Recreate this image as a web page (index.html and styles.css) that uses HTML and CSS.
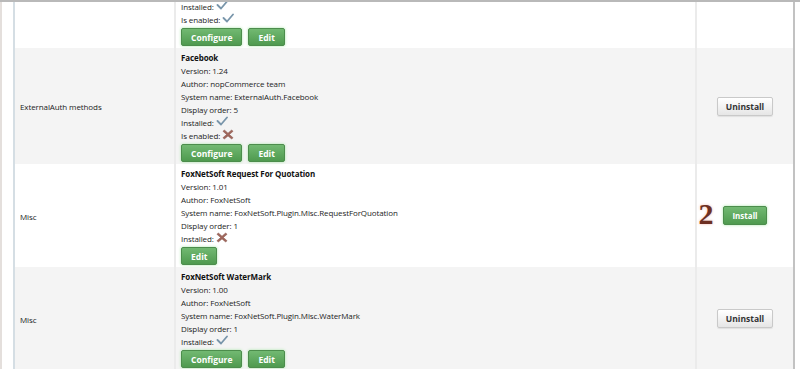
FILE: index.html
```html
<!DOCTYPE html>
<html lang="en">
<head>
    <meta charset="UTF-8">
    <meta name="viewport" content="width=device-width, initial-scale=1.0">
    <title>Plugins</title>
    <link rel="stylesheet" href="styles.css">
</head>
<body>
    <div class="frame">
        <table class="plugins">
            <colgroup>
                <col class="col-group">
                <col class="col-info">
                <col class="col-action">
            </colgroup>
            <tr class="row-white">
                <td class="group"></td>
                <td class="info">
                    <div class="line">Installed: <svg class="ico" viewBox="0 0 12 11"><path class="tick" d="M1.5 5 L5 8.5 L11 1.5"/></svg></div>
                    <div class="line">Is enabled: <svg class="ico" viewBox="0 0 12 11"><path class="tick" d="M1.5 5 L5 8.5 L11 1.5"/></svg></div>
                    <div class="btns">
                        <button class="btn-green">Configure</button>
                        <button class="btn-green">Edit</button>
                    </div>
                </td>
                <td class="action"></td>
            </tr>
            <tr class="row-gray">
                <td class="group">ExternalAuth methods</td>
                <td class="info">
                    <div class="line title">Facebook</div>
                    <div class="line">Version: 1.24</div>
                    <div class="line">Author: nopCommerce team</div>
                    <div class="line">System name: ExternalAuth.Facebook</div>
                    <div class="line">Display order: 5</div>
                    <div class="line">Installed: <svg class="ico" viewBox="0 0 12 11"><path class="tick" d="M1.5 5 L5 8.5 L11 1.5"/></svg></div>
                    <div class="line">Is enabled: <svg class="ico" viewBox="0 0 12 12"><path class="cross" d="M2 1 L6 4.5 L10 1 L11.5 2.5 L7.5 6 L11.5 9.5 L10 11 L6 7.5 L2 11 L0.5 9.5 L4.5 6 L0.5 2.5 Z"/></svg></div>
                    <div class="btns">
                        <button class="btn-green">Configure</button>
                        <button class="btn-green">Edit</button>
                    </div>
                </td>
                <td class="action"><button class="btn-gray">Uninstall</button></td>
            </tr>
            <tr class="row-white">
                <td class="group">Misc</td>
                <td class="info">
                    <div class="line title">FoxNetSoft Request For Quotation</div>
                    <div class="line">Version: 1.01</div>
                    <div class="line">Author: FoxNetSoft</div>
                    <div class="line">System name: FoxNetSoft.Plugin.Misc.RequestForQuotation</div>
                    <div class="line">Display order: 1</div>
                    <div class="line">Installed: <svg class="ico" viewBox="0 0 12 12"><path class="cross" d="M2 1 L6 4.5 L10 1 L11.5 2.5 L7.5 6 L11.5 9.5 L10 11 L6 7.5 L2 11 L0.5 9.5 L4.5 6 L0.5 2.5 Z"/></svg></div>
                    <div class="btns">
                        <button class="btn-green">Edit</button>
                    </div>
                </td>
                <td class="action">
                    <span class="install-wrap">
                        <span class="step">2</span>
                        <button class="btn-green btn-small">Install</button>
                    </span>
                </td>
            </tr>
            <tr class="row-gray">
                <td class="group">Misc</td>
                <td class="info">
                    <div class="line title">FoxNetSoft WaterMark</div>
                    <div class="line">Version: 1.00</div>
                    <div class="line">Author: FoxNetSoft</div>
                    <div class="line">System name: FoxNetSoft.Plugin.Misc.WaterMark</div>
                    <div class="line">Display order: 1</div>
                    <div class="line">Installed: <svg class="ico" viewBox="0 0 12 11"><path class="tick" d="M1.5 5 L5 8.5 L11 1.5"/></svg></div>
                    <div class="btns">
                        <button class="btn-green">Configure</button>
                        <button class="btn-green">Edit</button>
                    </div>
                </td>
                <td class="action"><button class="btn-gray">Uninstall</button></td>
            </tr>
        </table>
    </div>
</body>
</html>
```

FILE: styles.css
```css
body {
    margin: 0;
    border-top: 2px solid #b9b9b9;
    font-family: "Open Sans", "DejaVu Sans", sans-serif;
    font-size: 8px;
    letter-spacing: -0.1px;
    color: #1c1c1c;
    background-color: #fff;
    overflow: hidden;
}
.frame {
    border-left: 2px solid #e4dfdc;
    padding-left: 11px;
    height: 367px;
    overflow: hidden;
}
.plugins {
    width: 782px;
    border-collapse: collapse;
    border-left: 2px solid #d5dee4;
    border-right: 2px solid #c2c2c2;
    margin-top: -5px;
}
.col-group { width: 161px; }
.col-action { width: 98px; }
td {
    padding: 3px 4px 2px 5px;
    line-height: 13px;
}
.group {
    vertical-align: middle;
    border-right: 2px solid #ebebeb;
}
.info {
    vertical-align: top;
    border-right: 2px solid #ebebeb;
}
.action {
    vertical-align: middle;
    text-align: center;
    padding: 0;
}
.row-gray td { background-color: #f4f4f4; }
.row-white td { background-color: #fff; }
.line {
    height: 13px;
    white-space: nowrap;
}
.title { font-weight: bold; color: #111; }
.ico {
    width: 12px;
    height: 11px;
    vertical-align: -1px;
}
.tick {
    fill: none;
    stroke: #7895aa;
    stroke-width: 1.8;
    stroke-linecap: round;
    stroke-linejoin: round;
}
.cross { fill: #a0675c; stroke: #7c463e; stroke-width: 0.5; }
.btns {
    display: flex;
    gap: 6px;
    margin-top: 2px;
}
.btn-green {
    height: 18px;
    padding: 0 9px;
    font-family: inherit;
    font-size: 8.5px;
    font-weight: bold;
    letter-spacing: 0;
    color: #fff;
    background: linear-gradient(#72b972, #4f9a4f);
    border: 1px solid #4c8d4c;
    border-radius: 2px;
    box-shadow: 0 0 3px #a6e6a6;
}
.btn-small {
    height: 19px;
    padding: 0 8px;
    font-size: 8px;
}
.btn-gray {
    height: 19px;
    padding: 0 8px;
    font-family: inherit;
    font-size: 8.5px;
    font-weight: bold;
    letter-spacing: 0;
    color: #333;
    background: linear-gradient(#ffffff, #e6e6e6);
    border: 1px solid #c9c9c9;
    border-radius: 2px;
    box-shadow: 0 1px 1px rgba(0, 0, 0, 0.08);
}
.install-wrap {
    position: relative;
    display: inline-block;
}
.step {
    position: absolute;
    left: -25px;
    top: -7px;
    font-family: "Liberation Serif", serif;
    font-size: 30px;
    font-weight: bold;
    line-height: 30px;
    color: #6d2f22;
    text-shadow: 0 0 3px #f0b8b0;
}
```
